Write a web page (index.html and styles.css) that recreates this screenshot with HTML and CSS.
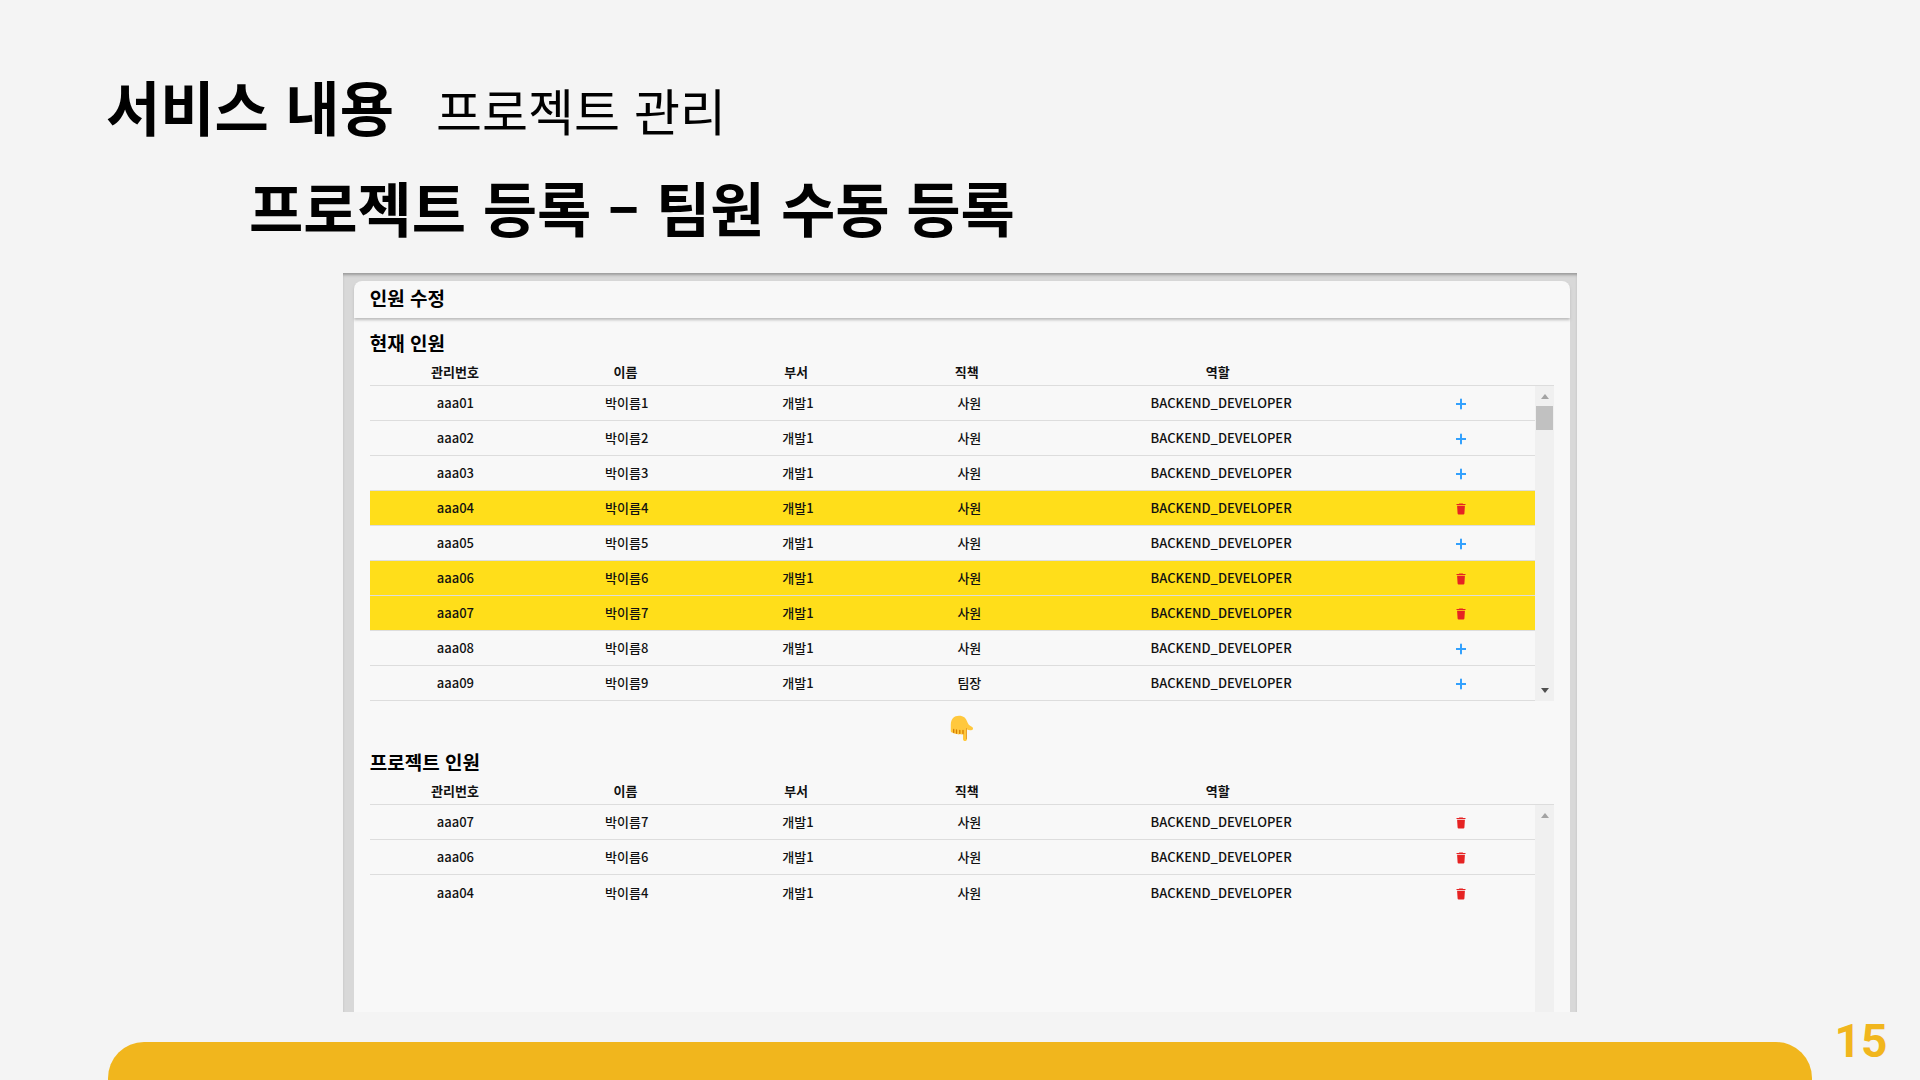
FILE: index.html
```html
<!DOCTYPE html>
<html lang="ko">
<head>
<meta charset="utf-8">
<meta name="viewport" content="width=device-width, initial-scale=1">
<title>서비스 내용 - 프로젝트 관리</title>
<link rel="stylesheet" href="styles.css">
</head>
<body>
<svg class="sprite" aria-hidden="true">
  <symbol id="plus" viewBox="0 0 10 12"><path d="M5 1.500v9M.5 6h9" fill="none" stroke="currentColor" stroke-width="2" stroke-linecap="round"/></symbol>
  <symbol id="trash" viewBox="0 0 10 12"><path d="M3.3 .4h3.4l.5.6h2.3v1H.5V1h2.300zM1.100 2.700h7.800l-.5 7.800q-.1.900-1 .900H2.600q-.9 0-1-.9z" fill="currentColor"/></symbol>
</svg>
<main class="slide">
  <header class="heading">
    <div class="heading-row">
      <h1 class="title">서비스 내용</h1>
      <p class="topic">프로젝트 관리</p>
    </div>
    <h2 class="subtitle">프로젝트 등록 – 팀원 수동 등록</h2>
  </header>

  <section class="frame">
    <div class="modal">
      <h3 class="modal-title">인원 수정</h3>
      <div class="modal-body">
        <h4 class="list-title" id="current">현재 인원</h4>
        <div class="list">
          <table class="members" aria-labelledby="current">
            <thead><tr><th>관리번호</th><th>이름</th><th>부서</th><th>직책</th><th class="role">역할</th><th class="action"></th></tr></thead>
            <tbody>
              <tr><td>aaa01</td><td>박이름1</td><td>개발1</td><td>사원</td><td class="role">BACKEND_DEVELOPER</td><td class="action"><button class="add" type="button" aria-label="추가"><svg class="icon"><use href="#plus"/></svg></button></td></tr>
              <tr><td>aaa02</td><td>박이름2</td><td>개발1</td><td>사원</td><td class="role">BACKEND_DEVELOPER</td><td class="action"><button class="add" type="button" aria-label="추가"><svg class="icon"><use href="#plus"/></svg></button></td></tr>
              <tr><td>aaa03</td><td>박이름3</td><td>개발1</td><td>사원</td><td class="role">BACKEND_DEVELOPER</td><td class="action"><button class="add" type="button" aria-label="추가"><svg class="icon"><use href="#plus"/></svg></button></td></tr>
              <tr class="picked"><td>aaa04</td><td>박이름4</td><td>개발1</td><td>사원</td><td class="role">BACKEND_DEVELOPER</td><td class="action"><button class="remove" type="button" aria-label="삭제"><svg class="icon"><use href="#trash"/></svg></button></td></tr>
              <tr><td>aaa05</td><td>박이름5</td><td>개발1</td><td>사원</td><td class="role">BACKEND_DEVELOPER</td><td class="action"><button class="add" type="button" aria-label="추가"><svg class="icon"><use href="#plus"/></svg></button></td></tr>
              <tr class="picked"><td>aaa06</td><td>박이름6</td><td>개발1</td><td>사원</td><td class="role">BACKEND_DEVELOPER</td><td class="action"><button class="remove" type="button" aria-label="삭제"><svg class="icon"><use href="#trash"/></svg></button></td></tr>
              <tr class="picked"><td>aaa07</td><td>박이름7</td><td>개발1</td><td>사원</td><td class="role">BACKEND_DEVELOPER</td><td class="action"><button class="remove" type="button" aria-label="삭제"><svg class="icon"><use href="#trash"/></svg></button></td></tr>
              <tr><td>aaa08</td><td>박이름8</td><td>개발1</td><td>사원</td><td class="role">BACKEND_DEVELOPER</td><td class="action"><button class="add" type="button" aria-label="추가"><svg class="icon"><use href="#plus"/></svg></button></td></tr>
              <tr><td>aaa09</td><td>박이름9</td><td>개발1</td><td>팀장</td><td class="role">BACKEND_DEVELOPER</td><td class="action"><button class="add" type="button" aria-label="추가"><svg class="icon"><use href="#plus"/></svg></button></td></tr>
            </tbody>
          </table>
          <div class="scrollbar" aria-hidden="true">
            <span class="arrow arrow-up"></span>
            <span class="thumb"></span>
            <span class="arrow arrow-down"></span>
          </div>
        </div>

        <svg class="hand" viewBox="0 0 24 27" role="img" aria-label="아래로">
          <path d="M.8 16V9.500C1 4 4 .7 9 .7c4.500 0 7 2.300 8.200 6 .8 2.400 2 3.700 4.600 5 1.600.8 1.700 2.700.2 3.300-1.700.6-3.400.3-5-.5V24c0 2.800-4 2.800-4 0v-5.500c-.6 1.300-2.600 1.300-3.200 0-.7 1.300-2.700 1.200-3.300-.2-.8.900-2.400.6-2.800-.8C2.300 18 .8 17.400.8 16z" fill="#ffc83d"/>
          <path d="M3.700 14.500v3M6.500 15v3.300M9.800 15.300v3.200M13 15.300v3.500" fill="none" stroke="#d67d00" stroke-width="1.300" stroke-linecap="round"/>
          <path d="M16.500 13v11" fill="none" stroke="#e89f2b" stroke-width="1"/>
        </svg>

        <h4 class="list-title" id="project">프로젝트 인원</h4>
        <div class="list list-project">
          <table class="members" aria-labelledby="project">
            <thead><tr><th>관리번호</th><th>이름</th><th>부서</th><th>직책</th><th class="role">역할</th><th class="action"></th></tr></thead>
            <tbody>
              <tr><td>aaa07</td><td>박이름7</td><td>개발1</td><td>사원</td><td class="role">BACKEND_DEVELOPER</td><td class="action"><button class="remove" type="button" aria-label="삭제"><svg class="icon"><use href="#trash"/></svg></button></td></tr>
              <tr><td>aaa06</td><td>박이름6</td><td>개발1</td><td>사원</td><td class="role">BACKEND_DEVELOPER</td><td class="action"><button class="remove" type="button" aria-label="삭제"><svg class="icon"><use href="#trash"/></svg></button></td></tr>
              <tr><td>aaa04</td><td>박이름4</td><td>개발1</td><td>사원</td><td class="role">BACKEND_DEVELOPER</td><td class="action"><button class="remove" type="button" aria-label="삭제"><svg class="icon"><use href="#trash"/></svg></button></td></tr>
            </tbody>
          </table>
          <div class="scrollbar" aria-hidden="true"><span class="arrow arrow-up"></span></div>
        </div>
      </div>
    </div>
  </section>

  <footer class="footer">
    <div class="bar"></div>
    <span class="page-number">15</span>
  </footer>
</main>
</body>
</html>
```
FILE: styles.css
```css
* {
  box-sizing: border-box;
}

body {
  margin: 0;
  background: #f4f4f4;
  color: #000;
  font-family: "Noto Sans CJK KR", sans-serif;
}

h1, h2, h3, h4, p {
  margin: 0;
}

.sprite {
  position: absolute;
  width: 0;
  height: 0;
}

.slide {
  display: flex;
  flex-direction: column;
  min-height: 100vh;
}

.heading {
  padding: 62px 106px 0;
}

.heading-row {
  display: flex;
  align-items: baseline;
  gap: 42px;
}

.title,
.subtitle {
  font-size: 59px;
  line-height: 88px;
  font-weight: 700;
}

.topic {
  font-size: 50px;
  line-height: 88px;
  font-weight: 400;
}

.subtitle {
  margin-top: 10px;
  padding-left: 143px;
}

/* dimmed backdrop around the dialog */
.frame {
  width: 64.3%;
  margin: 22px auto 0;
  padding: 8px 7px 0 11px;
  background: #d8d8d8;
  box-shadow: inset 0 3px 3px -1px #999;
}

.modal {
  background: #f8f8f8;
  border-radius: 8px 8px 0 0;
}

.modal-title {
  padding: 0 16px 4px;
  border-radius: 8px 8px 0 0;
  box-shadow: 0 2px 3px #bbb;
  font-size: 19px;
  line-height: 33px;
  font-weight: 700;
}

.modal-body {
  padding: 10px 16px 0;
}

.list-title {
  font-size: 19px;
  line-height: 30px;
  font-weight: 700;
}

.list {
  position: relative;
}

.members,
.members tbody {
  display: block;
}

.members thead,
.members tbody tr {
  display: table;
  width: 100%;
  table-layout: fixed;
  border-spacing: 0;
}

.members thead {
  border-bottom: 1px solid #ddd;
}

.members tbody {
  padding-right: 19px;
}

.members th,
.members td {
  padding: 0;
  text-align: center;
  font-size: 13px;
  line-height: 20px;
  color: #111;
}

.members th {
  width: 14.4%;
  height: 27px;
  font-weight: 700;
}

.members td {
  width: 14.7%;
  height: 35px;
  border-bottom: 1px solid #ddd;
  font-weight: 500;
}

.members th.role {
  width: 28%;
}

.members td.role {
  width: 28.5%;
}

.members .action {
  width: auto;
}

.picked {
  background: #ffde1a;
}

.list-project {
  min-height: 235px;
}

.list-project tr:last-child td {
  border-bottom: 0;
}

.add,
.remove {
  display: inline-flex;
  padding: 0;
  border: 0;
  background: none;
  vertical-align: middle;
  cursor: pointer;
}

.add {
  color: #33a1fd;
}

.remove {
  color: #e62323;
}

.icon {
  width: 10px;
  height: 12px;
}

/* drawn scrollbar, laid over the right edge of the rows */
.scrollbar {
  position: absolute;
  top: 28px;
  right: 0;
  bottom: 0;
  display: flex;
  flex-direction: column;
  align-items: center;
  width: 19px;
  padding: 8px 0;
  background: #f0f0f0;
}

.arrow {
  border: 4px solid transparent;
}

.arrow-up {
  border-top: 0;
  border-bottom: 5px solid #a3a3a3;
}

.arrow-down {
  margin-top: auto;
  border-top: 5px solid #505050;
  border-bottom: 0;
}

.thumb {
  width: 17px;
  height: 24px;
  margin-top: 7px;
  background: #c1c1c1;
}

.hand {
  display: block;
  width: 24px;
  height: 27px;
  margin: 14px auto 5px;
}

.footer {
  display: grid;
  grid-template-columns: 108px 1fr 108px;
  align-items: end;
  margin-top: auto;
}

.bar {
  grid-column: 2;
  height: 38px;
  border-radius: 36px 36px 0 0;
  background: #f1b61d;
}

.page-number {
  padding: 0 10px 11px 0;
  color: #f1b61d;
  font-family: Roboto, sans-serif;
  font-size: 46px;
  line-height: 55px;
  font-weight: 700;
  text-align: center;
}
```
